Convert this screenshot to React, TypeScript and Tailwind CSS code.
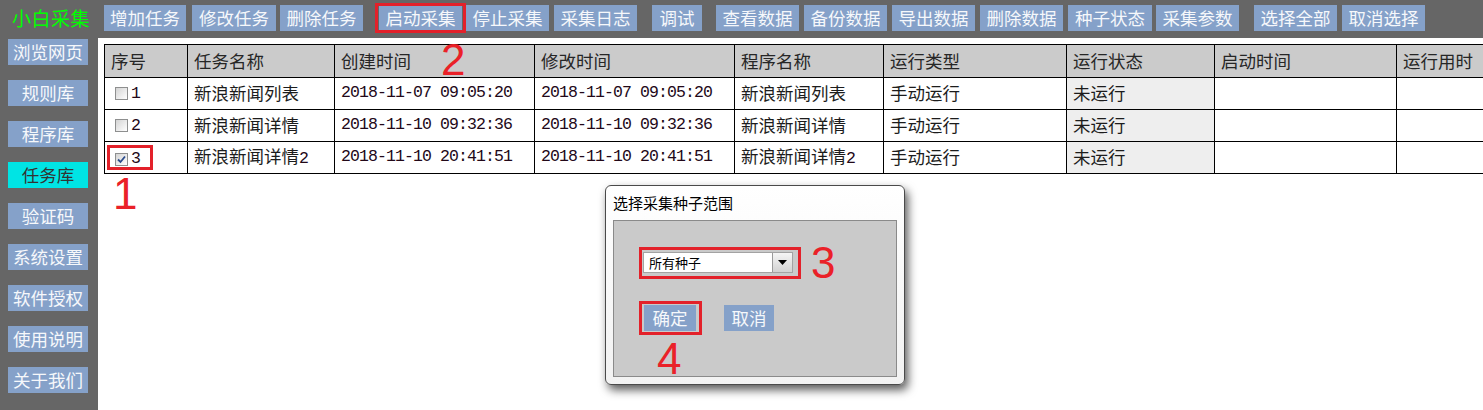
import React from "react";

const CJK = { fontFamily: '"Noto Sans CJK SC", "Noto Sans", sans-serif' };

const topButtons: { t: string; c: string; red?: boolean }[] = [
  { t: "增加任务", c: "ml-[0px] w-[82px]" },
  { t: "修改任务", c: "ml-[6px] w-[84px]" },
  { t: "删除任务", c: "ml-[4px] w-[83px]" },
  { t: "启动采集", c: "ml-[12px] w-[83px]", red: true },
  { t: "停止采集", c: "ml-[0px] w-[83px]" },
  { t: "采集日志", c: "ml-[5px] w-[83px]" },
  { t: "调试", c: "ml-[15px] w-[50px]" },
  { t: "查看数据", c: "ml-[14px] w-[83px]" },
  { t: "备份数据", c: "ml-[5px] w-[83px]" },
  { t: "导出数据", c: "ml-[5px] w-[83px]" },
  { t: "删除数据", c: "ml-[5px] w-[83px]" },
  { t: "种子状态", c: "ml-[5px] w-[84px]" },
  { t: "采集参数", c: "ml-[4px] w-[83px]" },
  { t: "选择全部", c: "ml-[15px] w-[83px]" },
  { t: "取消选择", c: "ml-[5px] w-[83px]" },
];

const side = ["浏览网页", "规则库", "程序库", "任务库", "验证码", "系统设置", "软件授权", "使用说明", "关于我们"];

const cols = [83, 147, 200, 200, 149, 183, 148, 182, 130];
const heads = ["序号", "任务名称", "创建时间", "修改时间", "程序名称", "运行类型", "运行状态", "启动时间", "运行用时"];

const rows = [
  { id: "1", name: "新浪新闻列表", c: "2018-11-07 09:05:20", m: "2018-11-07 09:05:20", p: "新浪新闻列表", checked: false },
  { id: "2", name: "新浪新闻详情", c: "2018-11-10 09:32:36", m: "2018-11-10 09:32:36", p: "新浪新闻详情", checked: false },
  { id: "3", name: "新浪新闻详情2", c: "2018-11-10 20:41:51", m: "2018-11-10 20:41:51", p: "新浪新闻详情2", checked: true },
];

const MONO = { fontFamily: '"Liberation Mono", "DejaVu Sans Mono", monospace' };
const NUM = "text-[16.5px] tracking-[-0.9px] text-[#220818]";

function Mixed({ s }: { s: string }) {
  const m = s.match(/^(.*?)(\d*)$/);
  const a = m ? m[1] : s;
  const b = m ? m[2] : "";
  return (
    <>
      {a}
      {b && (
        <span className={NUM} style={MONO}>
          {b}
        </span>
      )}
    </>
  );
}

function Checkbox({ checked }: { checked: boolean }) {
  return (
    <span className="shrink-0 inline-flex items-center justify-center w-[13px] h-[13px] border border-[#8e8f8f] bg-gradient-to-br from-[#d4d4d4] to-[#ffffff] mr-[3px]">
      {checked && (
        <svg width="9" height="9" viewBox="0 0 9 9">
          <path d="M1 4.5 L3.5 7 L8 1.5" stroke="#2b4c8c" strokeWidth="1.8" fill="none" />
        </svg>
      )}
    </span>
  );
}

function RedNum({ n, cls }: { n: string; cls: string }) {
  return (
    <div
      className={"absolute text-[44px] leading-none text-[#ea2128] " + cls}
      style={{ fontFamily: '"Liberation Sans", Arial, sans-serif' }}
    >
      {n}
    </div>
  );
}

export default function App() {
  return (
    <div className="relative w-[1483px] h-[410px] overflow-hidden bg-[#666666]" style={CJK}>
      {/* top bar */}
      <div className="flex items-start h-[38px] pt-[5px]">
        <div className="shrink-0 ml-[12px] w-[92px] h-[26px] flex items-center text-[19px] text-[#00ff00] tracking-[0.5px]">
          小白采集
        </div>
        {topButtons.map((b) =>
          b.red ? (
            <div
              key={b.t}
              className={"shrink-0 -mt-[2px] h-[30px] border-[3px] border-[#e3212a] flex items-center px-[1px] " + b.c.split(" ")[0]}
            >
              <div className="w-[83px] h-[24px] bg-[#85a1c9] text-[#f6f8fb] text-[17.5px] flex items-center justify-center">
                {b.t}
              </div>
            </div>
          ) : (
            <div
              key={b.t}
              className={"shrink-0 h-[26px] bg-[#85a1c9] text-[#f6f8fb] text-[17.5px] flex items-center justify-center " + b.c}
            >
              {b.t}
            </div>
          )
        )}
      </div>

      <div className="flex h-[372px]">
        {/* sidebar */}
        <div className="shrink-0 w-[98px] flex flex-col gap-[15px] pt-[1px] pl-[8px]">
          {side.map((s) => (
            <div
              key={s}
              className={
                "w-[80px] h-[26px] flex items-center justify-center text-[17.5px] " +
                (s === "任务库" ? "bg-[#00e4e4] text-[#333333]" : "bg-[#85a1c9] text-[#f6f8fb]")
              }
            >
              {s}
            </div>
          ))}
        </div>

        {/* main */}
        <div className="flex-1 min-w-0 overflow-hidden bg-white pl-[6px] pt-[6px]">
          <table className="table-fixed border-collapse border border-black text-[17.5px] text-[#1c1c1c]" style={{ width: 1422 }}>
            <colgroup>
              {cols.map((w, i) => (
                <col key={i} style={{ width: w }} />
              ))}
            </colgroup>
            <thead>
              <tr className="h-[33px] bg-[#cbcbcb]">
                {heads.map((h) => (
                  <th key={h} className="border border-black text-left font-normal pl-[6px] whitespace-nowrap text-[#262626]">
                    {h}
                  </th>
                ))}
              </tr>
            </thead>
            <tbody>
              {rows.map((r) => (
                <tr key={r.id} className="h-[32px]">
                  <td className="border border-black pl-[10px] whitespace-nowrap">
                    <span className="inline-flex items-center">
                      <Checkbox checked={r.checked} />
                      <span className={NUM} style={MONO}>
                        {r.id}
                      </span>
                    </span>
                  </td>
                  <td className="border border-black pl-[6px] whitespace-nowrap">
                    <Mixed s={r.name} />
                  </td>
                  <td className={"border border-black pl-[6px] whitespace-nowrap " + NUM} style={MONO}>
                    {r.c}
                  </td>
                  <td className={"border border-black pl-[6px] whitespace-nowrap " + NUM} style={MONO}>
                    {r.m}
                  </td>
                  <td className="border border-black pl-[6px] whitespace-nowrap">
                    <Mixed s={r.p} />
                  </td>
                  <td className="border border-black pl-[6px] whitespace-nowrap">手动运行</td>
                  <td className="border border-black pl-[6px] whitespace-nowrap bg-[#eeeeee]">未运行</td>
                  <td className="border border-black"></td>
                  <td className="border border-black"></td>
                </tr>
              ))}
            </tbody>
          </table>
        </div>
      </div>

      {/* annotation 1 box around checkbox cell */}
      <div className="absolute left-[107px] top-[145px] w-[46px] h-[25px] border-[3px] border-[#e3212a]"></div>
      <RedNum n="1" cls="left-[113px] top-[172px]" />
      <RedNum n="2" cls="left-[441px] top-[38px]" />

      {/* dialog */}
      <div className="absolute left-[605px] top-[185px] w-[300px] h-[200px] rounded-[6px] border border-[#4a4a4a] bg-gradient-to-b from-[#ffffff] to-[#f2f2f2] shadow-[3px_5px_10px_rgba(0,0,0,0.65)] flex flex-col">
        <div className="h-[34px] pl-[7px] pt-[9px] text-[15px] text-black leading-none">选择采集种子范围</div>
        <div className="relative mx-[7px] mb-[7px] flex-1 bg-[#cacaca] border border-[#8a8a8a] pl-[25px] pt-[26px]">
          <div className="flex">
            <div className="border-[3px] border-[#e3212a] pl-[1px] pr-[5px] pt-[2px] pb-[3px]">
              <div className="w-[150px] h-[21px] border border-[#a3a3a3] bg-white flex items-center">
                <span className="flex-1 pl-[5px] text-[13px] text-black leading-none">所有种子</span>
                <span className="w-[20px] h-[19px] border-l border-[#9a9a9a] bg-gradient-to-b from-[#f6f6f6] to-[#d2d2d2] flex items-center justify-center">
                  <svg width="9" height="5" viewBox="0 0 9 5">
                    <path d="M0 0 L9 0 L4.5 5 Z" fill="#000" />
                  </svg>
                </span>
              </div>
            </div>
          </div>
          <div className="flex items-center mt-[22px]">
            <div className="border-[3px] border-[#e3212a] pl-[2px] pr-[3px] py-[1px]">
              <div className="w-[52px] h-[26px] bg-[#85a1c9] text-[#f6f8fb] text-[17.5px] flex items-center justify-center">确定</div>
            </div>
            <div className="ml-[22px] w-[50px] h-[26px] bg-[#85a1c9] text-[#f6f8fb] text-[17.5px] flex items-center justify-center">取消</div>
          </div>
        </div>
      </div>
      <RedNum n="3" cls="left-[811px] top-[241px]" />
      <RedNum n="4" cls="left-[657px] top-[337px]" />
    </div>
  );
}
